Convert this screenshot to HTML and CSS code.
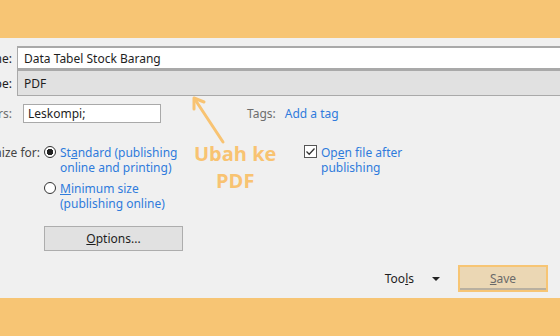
FILE: index.html
```html
<!DOCTYPE html>
<html lang="en">
<head>
    <meta charset="UTF-8">
    <title>Publish as PDF</title>
    <link rel="stylesheet" href="styles.css">
</head>
<body>
    <div class="band"></div>

    <div class="dialog">
        <div class="row">
            <span class="field-label">File name:</span>
            <div class="text-box name-box">Data Tabel Stock Barang</div>
        </div>
        <div class="row">
            <span class="field-label">Save as type:</span>
            <div class="text-box type-box">PDF</div>
        </div>

        <div class="row meta-row">
            <span class="field-label muted">Authors:</span>
            <div class="text-box author-box">Leskompi;</div>
            <span class="muted tags-label">Tags:</span>
            <span class="link">Add a tag</span>
        </div>

        <div class="row options-row">
            <span class="field-label opt-label">Optimize for:</span>
            <div class="radio-group">
                <div class="choice">
                    <span class="radio checked"></span>
                    <span class="link">St<u>a</u>ndard (publishing<br>online and printing)</span>
                </div>
                <div class="choice">
                    <span class="radio"></span>
                    <span class="link"><u>M</u>inimum size<br>(publishing online)</span>
                </div>
                <button class="btn options-btn"><u>O</u>ptions...</button>
            </div>
            <div class="choice">
                <span class="checkbox">
                    <svg width="11" height="11" viewBox="0 0 11 11"><path d="M1.5 5.5 L4.2 8.2 L9.5 2.5" fill="none" stroke="#333" stroke-width="1.3"/></svg>
                </span>
                <span class="link">Op<u>e</u>n file after<br>publishing</span>
            </div>
        </div>

        <div class="footer">
            <span class="tools">Too<u>l</u>s</span>
            <span class="caret"></span>
            <button class="btn save-btn"><u>S</u>ave</button>
        </div>

        <!-- annotation drawn over the dialog -->
        <svg class="arrow" width="40" height="52" viewBox="0 0 40 52">
            <path d="M33 48 L6 7" stroke="#f8c372" stroke-width="3" stroke-linecap="round" fill="none"/>
            <path d="M14 8 L4 4 L4 15" stroke="#f8c372" stroke-width="3" stroke-linecap="round" stroke-linejoin="round" fill="none"/>
        </svg>
        <div class="note">Ubah ke<br>PDF</div>
    </div>

    <div class="band"></div>
</body>
</html>
```

FILE: styles.css
```css
body {
    margin: 0;
    width: 560px;
    height: 336px;
    overflow: hidden;
    background-color: #f0f0f0;
    font-family: 'Noto Sans', 'Open Sans', sans-serif;
    font-size: 12px;
    color: #1e1e1e;
}

.band {
    height: 38px;
    background-color: #f7c574;
}

.dialog {
    position: relative;
    display: flex;
    flex-direction: column;
    height: 260px;
    width: 640px;
    margin-left: -80px;
    padding: 8px 12px 6px 0;
    box-sizing: border-box;
}

.row {
    display: flex;
    align-items: center;
}

.field-label {
    width: 92px;
    padding-right: 5px;
    text-align: right;
    white-space: nowrap;
}

.muted {
    color: #6d6d6d;
}

.link {
    color: #2f7bdc;
}

.text-box {
    box-sizing: border-box;
    border: 1px solid #a9a9a9;
    padding: 0 6px;
    display: flex;
    align-items: center;
}

.name-box {
    flex: 1;
    height: 24px;
    background-color: #fff;
    margin-right: -20px;
    border-top-width: 2px;
    border-bottom-width: 2px;
}

.type-box {
    flex: 1;
    height: 27px;
    background-color: #e1e1e1;
    margin-right: -20px;
    margin-top: -1px;
    border-top-width: 2px;
}

.meta-row {
    margin-top: 8px;
}

.author-box {
    width: 138px;
    height: 19px;
    margin-left: 6px;
    padding: 0 4px;
    background-color: #fff;
}

.tags-label {
    margin-left: 86px;
    margin-right: 9px;
}

.options-row {
    align-items: flex-start;
    margin-top: 22px;
}

.opt-label {
    width: 120px;
    padding-right: 4px;
    line-height: 15px;
    color: #454545;
}

.radio-group {
    width: 260px;
}

.choice {
    display: flex;
    align-items: flex-start;
    line-height: 15px;
    margin-bottom: 6px;
}

.radio {
    width: 12px;
    height: 12px;
    margin: 1px 4px 0 0;
    border: 1px solid #333;
    border-radius: 50%;
    box-sizing: border-box;
    background-color: #fff;
    flex-shrink: 0;
}

.radio.checked {
    background: radial-gradient(circle, #222 0 3px, #fff 3.5px);
}

.checkbox {
    width: 13px;
    height: 13px;
    margin: 0 4px 0 0;
    border: 1px solid #555;
    box-sizing: border-box;
    background-color: #fff;
    display: flex;
    align-items: center;
    justify-content: center;
    flex-shrink: 0;
}

.btn {
    font-family: inherit;
    font-size: 12px;
    color: #1e1e1e;
    background-color: #e1e1e1;
    border: 1px solid #adadad;
    padding: 0;
}

.options-btn {
    width: 139px;
    height: 25px;
    margin-top: 9px;
}

.footer {
    margin-top: auto;
    display: flex;
    align-items: center;
    justify-content: flex-end;
}

.tools {
    color: #1e1e1e;
}

.caret {
    width: 0;
    height: 0;
    margin: 0 18px 0 18px;
    border-left: 4px solid transparent;
    border-right: 4px solid transparent;
    border-top: 4px solid #222;
}

.save-btn {
    width: 90px;
    height: 27px;
    border: 2px solid #f7c574;
    background-color: #ebd7b4;
    color: #6a6a6a;
    box-shadow: inset 0 -2px 0 #b9b0a0;
}

.arrow {
    position: absolute;
    left: 270px;
    top: 56px;
}

.note {
    position: absolute;
    left: 274px;
    top: 102px;
    font-family: 'Open Sans', sans-serif;
    font-weight: bold;
    font-size: 20px;
    line-height: 27px;
    text-align: center;
    color: #f8c372;
}
```
